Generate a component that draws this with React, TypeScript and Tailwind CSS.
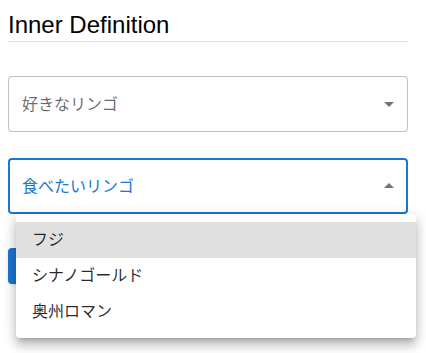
const JP = "font-['Roboto','Noto_Sans_CJK_JP',sans-serif]";

function Arrow({ up }: { up?: boolean }) {
  return (
    <svg viewBox="0 0 24 24" className={`h-6 w-6 shrink-0 fill-black/55 ${up ? "rotate-180" : ""}`}>
      <path d="M7 10l5 5 5-5z" />
    </svg>
  );
}

const OPTIONS = ["フジ", "シナノゴールド", "奥州ロマン"];

export default function App() {
  return (
    <div className={`min-h-screen bg-white px-2 pt-[11px] ${JP}`}>
      <div className="flex w-[400px] flex-col">
        <h2 className="border-b border-[#e0e0e0] pb-[2px] font-['Liberation_Sans',Arial,sans-serif] text-2xl leading-[28px] text-black">
          Inner Definition
        </h2>

        <div className="mt-[34px] flex h-14 items-center justify-between rounded border border-black/25 bg-white pl-[13px] pr-[6px]">
          <span className="text-base leading-[23px] text-black/60">好きなリンゴ</span>
          <Arrow />
        </div>

        <div className="relative mt-[26px]">
          <div className="flex h-14 items-center justify-between rounded border-2 border-[#1976d2] bg-white pl-[12px] pr-[5px]">
            <span className="text-base leading-[23px] text-[#1976d2]">食べたいリンゴ</span>
            <Arrow up />
          </div>

          <ul className="absolute left-2 top-full z-10 w-[400px] rounded bg-white py-2 shadow-[0px_5px_5px_-3px_rgba(0,0,0,0.2),0px_8px_10px_1px_rgba(0,0,0,0.14),0px_3px_14px_2px_rgba(0,0,0,0.12)]">
            {OPTIONS.map((o, i) => (
              <li
                key={o}
                className={`px-4 py-1.5 text-base leading-6 text-black/85 ${i === 0 ? "bg-[#e0e0e0]" : ""}`}
              >
                {o}
              </li>
            ))}
          </ul>
        </div>

        <button
          aria-label="submit"
          className="mt-[34px] h-9 w-24 rounded bg-[#1976d2] shadow"
        />
      </div>
    </div>
  );
}
